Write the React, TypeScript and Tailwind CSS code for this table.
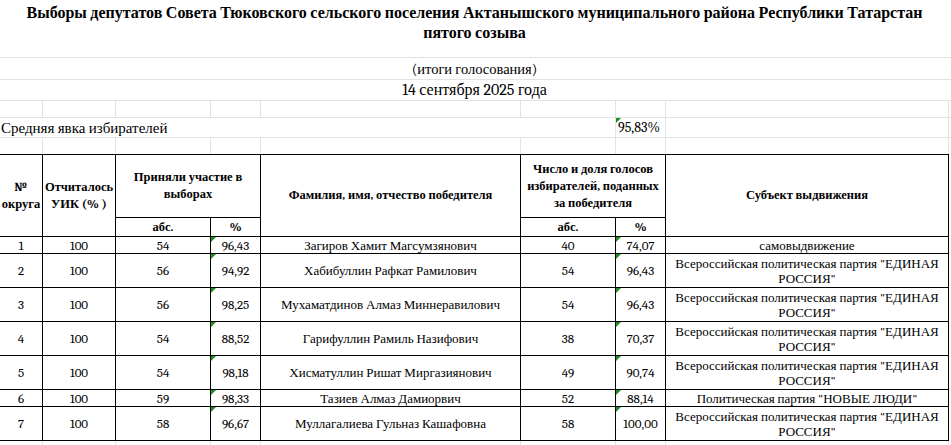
import React from "react"

const grid = "border-[#e2e2e2]"

const rows = [
  { n: "1", uik: "100", abs: "54", pct: "96,43", name: "Загиров Хамит Магсумзянович", votes: "40", share: "74,07", party: "самовыдвижение" },
  { n: "2", uik: "100", abs: "56", pct: "94,92", name: "Хабибуллин Рафкат Рамилович", votes: "54", share: "96,43", party: 'Всероссийская политическая партия "ЕДИНАЯ РОССИЯ"' },
  { n: "3", uik: "100", abs: "56", pct: "98,25", name: "Мухаматдинов Алмаз Миннеравилович", votes: "54", share: "96,43", party: 'Всероссийская политическая партия "ЕДИНАЯ РОССИЯ"' },
  { n: "4", uik: "100", abs: "54", pct: "88,52", name: "Гарифуллин Рамиль Назифович", votes: "38", share: "70,37", party: 'Всероссийская политическая партия "ЕДИНАЯ РОССИЯ"' },
  { n: "5", uik: "100", abs: "54", pct: "98,18", name: "Хисматуллин Ришат Миргазиянович", votes: "49", share: "90,74", party: 'Всероссийская политическая партия "ЕДИНАЯ РОССИЯ"' },
  { n: "6", uik: "100", abs: "59", pct: "98,33", name: "Тазиев Алмаз Дамиорвич", votes: "52", share: "88,14", party: 'Политическая партия "НОВЫЕ ЛЮДИ"' },
  { n: "7", uik: "100", abs: "58", pct: "96,67", name: "Муллагалиева Гульназ Кашафовна", votes: "58", share: "100,00", party: 'Всероссийская политическая партия "ЕДИНАЯ РОССИЯ"' },
]

// excel "number stored as text" marker
const Flag = () => (
  <span className="absolute left-0 top-0 h-0 w-0 border-t-[5px] border-r-[5px] border-t-[#1e8c1e] border-r-transparent" />
)

const EmptyRow = ({ h, last }: { h: string; last?: boolean }) => (
  <div className={`flex ${h} ${last ? "" : "border-b " + grid}`}>
    <div className={`w-[43px] shrink-0 border-r ${grid}`} />
    <div className={`w-[73px] shrink-0 border-r ${grid}`} />
    <div className={`w-[95px] shrink-0 border-r ${grid}`} />
    <div className={`w-[50px] shrink-0 border-r ${grid}`} />
    <div className={`w-[260px] shrink-0 border-r ${grid}`} />
    <div className={`w-[95px] shrink-0 border-r ${grid}`} />
    <div className={`w-[50px] shrink-0 border-r ${grid}`} />
    <div className={`w-[283px] shrink-0 border-r ${grid}`} />
    <div className="flex-1" />
  </div>
)

const cell = "flex items-center justify-center border-r border-b border-black text-center"
const head = cell + " font-bold text-[12.5px] leading-[17px] px-[2px]"

export default function App() {
  return (
    <div className="w-[951px] h-[445px] overflow-hidden bg-white text-black font-serif">
      <div className={`h-[58px] border-b ${grid}`}>
        <div className="w-[949px] pt-[3px] text-center font-bold text-[16px] leading-[20px]">
          <div className="whitespace-nowrap">
            Выборы депутатов Совета Тюковского сельского поселения Актанышского муниципального района Республики Татарстан
          </div>
          <div>пятого созыва</div>
        </div>
      </div>
      <div className={`h-[22px] border-b ${grid} flex`}>
        <div className="w-[949px] flex items-end justify-center text-[14.5px] leading-[19px]">(итоги голосования)</div>
      </div>
      <div className={`h-[21px] border-b ${grid} flex`}>
        <div className="w-[949px] flex items-center justify-center text-[16px] leading-[19px]">14 сентября 2025 года</div>
      </div>
      <EmptyRow h="h-[17px]" />
      <div className={`flex h-[20px] border-b ${grid} text-[14px] leading-[18px]`}>
        <div className={`w-[616px] shrink-0 border-r ${grid} flex items-center pl-[1px] text-[15px]`}>Средняя явка избирателей</div>
        <div className={`relative w-[50px] shrink-0 border-r ${grid} flex items-center pl-[2px]`}>
          <Flag />
          95,83%
        </div>
        <div className={`w-[283px] shrink-0 border-r ${grid}`} />
        <div className="flex-1" />
      </div>
      <EmptyRow h="h-[16px]" last />

      <div className="grid w-[949px] grid-cols-[43px_73px_95px_50px_260px_95px_50px_283px] grid-rows-[63px_19px_17px_34px_34px_34px_34px_17px_34px] border-t border-black text-[13px] leading-[15px]">
        <div className={head + " row-span-2"}>№<br />округа</div>
        <div className={head + " row-span-2"}>Отчиталось УИК (% )</div>
        <div className={head + " col-span-2"}>Приняли участие в<br />выборах</div>
        <div className={head + " row-span-2"}>Фамилия, имя, отчество победителя</div>
        <div className={head + " col-span-2"}>Число и доля голосов избирателей, поданных за победителя</div>
        <div className={head + " row-span-2"}>Субъект выдвижения</div>
        <div className={head}>абс.</div>
        <div className={head}>%</div>
        <div className={head}>абс.</div>
        <div className={head}>%</div>

        {rows.map((r) => (
          <React.Fragment key={r.n}>
            <div className={cell}>{r.n}</div>
            <div className={cell}>{r.uik}</div>
            <div className={cell}>{r.abs}</div>
            <div className={cell + " relative"}>
              <Flag />
              {r.pct}
            </div>
            <div className={cell}>{r.name}</div>
            <div className={cell}>{r.votes}</div>
            <div className={cell + " relative"}>
              <Flag />
              {r.share}
            </div>
            <div className={cell + " px-[6px]"}>{r.party}</div>
          </React.Fragment>
        ))}
      </div>
      <EmptyRow h="h-[5px]" last />
    </div>
  )
}
